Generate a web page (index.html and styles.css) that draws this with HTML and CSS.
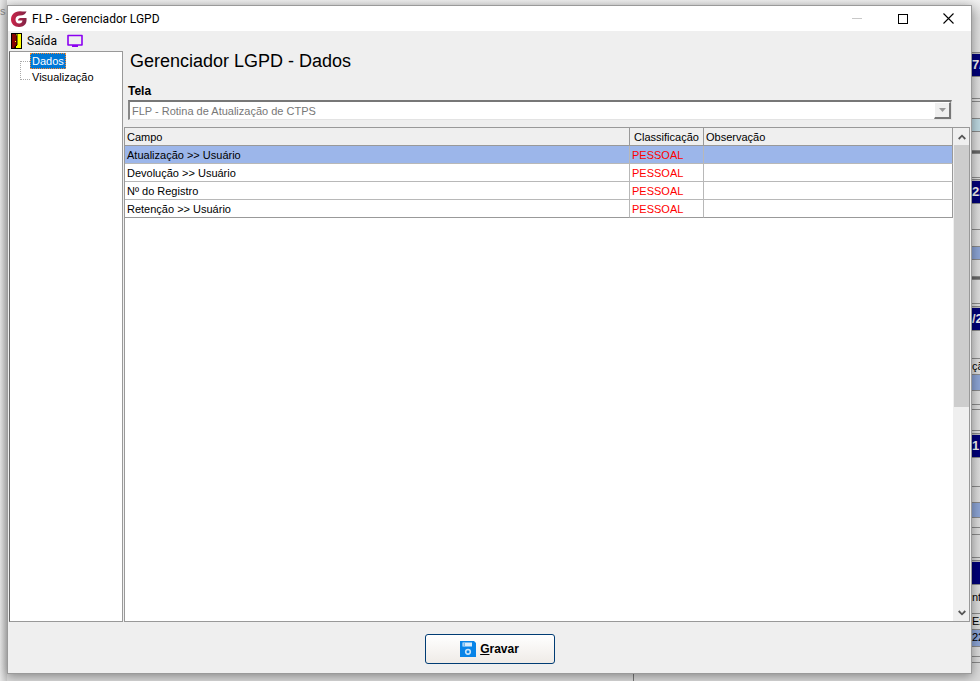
FILE: index.html
```html
<!DOCTYPE html>
<html lang="pt-BR">
<head>
<meta charset="utf-8">
<title>FLP - Gerenciador LGPD</title>
<link rel="stylesheet" href="styles.css">
</head>
<body>
<div class="backdrop" aria-hidden="true">
  <div class="backdrop-left">s</div>
  <div class="backdrop-main"><div class="backdrop-pane"></div></div>
  <div class="backdrop-right">
    <i class="gap tall"></i><b class="bar">7/</b>
    <i class="gap g22"></i><i class="gap g3"></i><i class="gap g17"></i><i class="sky"></i><i class="gap g19"></i><i class="dark"></i><i class="gap g24"></i><i class="gap g2"></i>
    <b class="bar">22</b>
    <i class="gap g26"></i><i class="gap g17"></i><i class="blue"></i><i class="gap g17"></i><i class="dark"></i><i class="gap g24"></i><i class="gap g3"></i>
    <b class="bar">/2</b>
    <i class="gap g28"></i><i class="cell">çã</i><i class="blue b16"></i><i class="gap g14"></i><i class="gap g5"></i><i class="gap g21"></i><i class="gap g3"></i>
    <b class="bar">1</b>
    <i class="gap g29"></i><i class="gap g16"></i><i class="blue b15"></i><i class="gap g10"></i><i class="gap g7"></i><i class="gap g23"></i><i class="gap g3"></i>
    <b class="bar"></b>
    <i class="cell c29">nto</i><i class="cell">Ex.</i><i class="blue b17">22</i><i class="gap g10"></i><i class="gap g6"></i>
  </div>
</div>
<main class="window">
  <header class="titlebar">
    <svg class="logo" viewBox="0 0 16 16"><defs><linearGradient id="lg" x1="0" y1="0" x2="1" y2="0"><stop offset="0" stop-color="#cc2449"/><stop offset="1" stop-color="#802446"/></linearGradient></defs><path fill="url(#lg)" d="M15.500.300C14 1 12 .3 9 .3 3 .3 0 4 0 8.500 0 13 3.500 16 8 16c3 0 5-1 6.500-3 1-1.500 1.200-4 1-6H9.500C8 7 7 8 7 9.500h4.500c-.2 2-1.500 3-3.300 3C6 12.500 4.500 11 4.500 8.500 4.500 6 6.500 4.500 9 4.500c3.500 0 5.500-1 6.500-4.200z"/></svg>
    <h1>FLP - Gerenciador LGPD</h1>
    <div class="caption-buttons">
      <button aria-label="Minimizar" disabled><svg viewBox="0 0 11 11"><path d="M1 5.500h10" stroke="#c8c8c8"/></svg></button>
      <button aria-label="Maximizar"><svg viewBox="0 0 11 11"><path d="M1 1h9v9H1z" fill="none" stroke="#000" shape-rendering="crispEdges"/></svg></button>
      <button aria-label="Fechar"><svg viewBox="0 0 11 11"><path d="M.5.5l10 10m0-10l-10 10" stroke="#000" stroke-width="1.100"/></svg></button>
    </div>
  </header>
  <nav class="toolbar">
    <button class="tool"><svg class="door" viewBox="0 0 11 16"><path d="M0 0h11v16H0z" fill="#000"/><path d="M5 1h5v14H5z" fill="#ff0"/><path d="M1 1h3l2 2v9l-2 1-1 2H1z" fill="#850000"/><path d="M6 1v11l-2 2" fill="none" stroke="#000"/><path d="M4 8h1v1H4z" fill="#ff0"/></svg>Saída</button>
    <button class="tool" aria-label="Monitor"><svg class="monitor" viewBox="0 0 16 14"><path d="M1 1.500h14v9.500H1z" fill="none" stroke="#8a00f0" stroke-width="1.600" stroke-linejoin="round"/><path d="M5 11h6v2H5z" fill="#8a00f0"/></svg></button>
  </nav>
  <div class="content">
    <aside class="tree">
      <ul>
        <li><a class="selected" href="#dados">Dados</a></li>
        <li><a href="#visualizacao">Visualização</a></li>
      </ul>
    </aside>
    <section class="page">
      <div class="form">
        <h2>Gerenciador LGPD - Dados</h2>
        <label for="tela">Tela</label>
        <div class="combo">
          <select id="tela" disabled><option>FLP - Rotina de Atualização de CTPS</option></select>
          <span class="drop"><svg viewBox="0 0 7 4"><path d="M0 0h7L3.500 4z" fill="#999"/></svg></span>
        </div>
      </div>
      <div class="grid-box">
        <div class="grid-area">
          <table>
            <colgroup><col><col class="col-class"><col class="col-obs"></colgroup>
            <thead><tr><th>Campo</th><th class="center">Classificação</th><th>Observação</th></tr></thead>
            <tbody>
              <tr class="current"><td>Atualização &gt;&gt; Usuário</td><td class="personal">PESSOAL</td><td></td></tr>
              <tr><td>Devolução &gt;&gt; Usuário</td><td class="personal">PESSOAL</td><td></td></tr>
              <tr><td>Nº do Registro</td><td class="personal">PESSOAL</td><td></td></tr>
              <tr><td>Retenção &gt;&gt; Usuário</td><td class="personal">PESSOAL</td><td></td></tr>
            </tbody>
          </table>
        </div>
        <div class="scrollbar">
          <button aria-label="Rolar para cima"><svg viewBox="0 0 8 6"><path d="M.7 5L4 1.700 7.300 5" fill="none" stroke="#555" stroke-width="1.800"/></svg></button>
          <div class="track"><div class="thumb"></div></div>
          <button aria-label="Rolar para baixo"><svg viewBox="0 0 8 6"><path d="M.7 1L4 4.300 7.300 1" fill="none" stroke="#555" stroke-width="1.800"/></svg></button>
        </div>
      </div>
    </section>
  </div>
  <footer class="actions">
    <button class="save"><svg viewBox="0 0 16 16"><path d="M0 0h14l2 2v14H0z" fill="#0884e8"/><path d="M2.500 1.500h9.500v4H2.500z" fill="#d8ecfc"/><path d="M3.500 2h1.500v3H3.500z" fill="#70b8f0"/><circle cx="8" cy="10.800" r="2.300" fill="none" stroke="#c8e4fa" stroke-width="1.600"/></svg><span><u>G</u>ravar</span></button>
  </footer>
</main>
</body>
</html>
```
FILE: styles.css
```css
* { box-sizing: border-box; }
html, body { height: 100%; }
body {
  margin: 0;
  padding: 5px 8px 7px 7px;
  background: #d9d9d9;
  color: #000;
  font: 11px/14px "Liberation Sans", Arial, sans-serif;
  overflow: hidden;
}
button { font: inherit; color: inherit; padding: 0; border: 0; background: none; display: flex; align-items: center; justify-content: center; }
svg { display: block; flex: none; }
h1, h2, ul { margin: 0; padding: 0; font-weight: normal; }

.backdrop { position: absolute; inset: 0; display: flex; overflow: hidden; background: linear-gradient(#f0f0f0, #dedede 18px, #d9d9d9); }
.backdrop-left { flex: none; width: 7px; padding-top: 4px; color: #888; background: linear-gradient(90deg, #e8e8e8, #cacaca); }
.backdrop-main { flex: 1; display: flex; align-items: flex-end; }
.backdrop-pane { width: 65%; height: 50%; border-right: 1px solid #777; }
.backdrop-right { flex: none; width: 8px; overflow: hidden; display: flex; flex-direction: column; }
.backdrop-right > * { flex: none; font-style: normal; white-space: nowrap; overflow: hidden; border-bottom: 1px solid #888; }
.bar { height: 24px; border-top: 1px solid #bbb; background: #000078; color: #eee; font-size: 13px; line-height: 22px; }
.cell { height: 16px; }
.c29 { height: 29px; line-height: 25px; }
.dark { height: 3px; background: #666; }
.sky { height: 13px; background: #bcd6df; }
.blue { height: 13px; background: #8ba3d3; }
.b15 { height: 15px; }
.b16 { height: 16px; }
.b17 { height: 17px; }
.tall { height: 53px; }
.g2 { height: 2px; } .g3 { height: 3px; } .g5 { height: 5px; } .g6 { height: 6px; } .g7 { height: 7px; }
.g10 { height: 10px; } .g14 { height: 14px; } .g16 { height: 16px; } .g17 { height: 17px; } .g19 { height: 19px; }
.g21 { height: 21px; } .g22 { height: 22px; } .g23 { height: 23px; } .g24 { height: 24px; } .g26 { height: 26px; } .g28 { height: 28px; } .g29 { height: 29px; }

.window {
  position: relative;
  height: 100%;
  display: flex;
  flex-direction: column;
  border: 1px solid #9a9a9a;
  background: #efefef;
  box-shadow: 0 2px 10px rgba(0, 0, 0, .4);
}
.titlebar { flex: none; height: 25px; display: flex; align-items: center; gap: 5px; padding-left: 3px; background: #fff; }
.logo { width: 16px; height: 16px; }
.titlebar h1 { flex: 1; font: 12px/16px Roboto, "Noto Sans", sans-serif; }
.caption-buttons { display: flex; }
.caption-buttons button { width: 46px; height: 24px; }
.caption-buttons svg { width: 11px; height: 11px; }

.toolbar { flex: none; height: 20px; display: flex; align-items: center; gap: 10px; padding-left: 3px; }
.tool { gap: 5px; font: 12px/16px Roboto, "Noto Sans", sans-serif; }
.door { width: 11px; height: 16px; }
.monitor { width: 16px; height: 14px; }

.content { flex: 1; min-height: 0; display: flex; gap: 1px; padding: 0 1px; }
.tree { flex: none; width: 114px; background: #fff; border: 1px solid #999; border-left-color: #666; }
.tree ul { list-style: none; margin-left: 10px; padding: 1px 0 0 10px; position: relative; }
.tree ul::before { content: ""; position: absolute; left: 0; top: 9px; width: 9px; height: 17px; border: 1px dotted #aaa; border-right: 0; }
.tree li { height: 16px; }
.tree a { display: inline-block; height: 16px; padding: 0 1px; line-height: 14px; border: 1px solid transparent; color: #000; text-decoration: none; }
.tree .selected { background: #0078d7; border: 1px dotted #ff8728; color: #fff; }

.page { flex: 1; min-width: 0; display: flex; flex-direction: column; }
.form { flex: none; height: 76px; padding: 0 18px 0 4px; display: flex; flex-direction: column; align-items: stretch; }
.form h2 { padding-left: 2px; font-size: 18px; line-height: 20px; }
.form label { margin: 13px 0 2px; font-size: 12px; line-height: 14px; font-weight: bold; }
.combo { display: flex; height: 20px; background: #fff; border: 1px solid #e3e3e3; border-top: 2px solid #777; border-left: 2px solid #888; }
.combo select { flex: 1; min-width: 0; appearance: none; border: 0; padding: 1px 2px 0; background: #fff; color: #777; opacity: 1; font: inherit; line-height: 16px; }
.drop { width: 17px; background: #efefef; border: 1px solid #fff; border-right: 2px solid #777; border-bottom: 2px solid #777; display: flex; align-items: center; justify-content: center; }
.drop svg { width: 7px; height: 4px; }

.grid-box { flex: 1; min-height: 0; display: flex; background: #fff; border: 1px solid #999; }
.grid-area { flex: 1; min-width: 0; }
table { width: 100%; table-layout: fixed; border-collapse: separate; border-spacing: 0; }
.col-class { width: 74px; }
.col-obs { width: 249px; }
th, td { height: 18px; padding: 1px 2px 0; border-right: 1px solid #b8b8b8; border-bottom: 1px solid #b8b8b8; line-height: 16px; text-align: left; font-weight: normal; white-space: nowrap; }
th { background: #efefef; border-color: #999; }
th:last-child, td:last-child { border-right-color: #999; }
tbody tr:last-child td { border-bottom-color: #999; }
.center { text-align: center; }
.current { background: #9cb6ea; }
.personal { color: #f00; }
.scrollbar { flex: none; width: 16px; padding-left: 1px; display: flex; flex-direction: column; background: #efefef; }
.scrollbar button { width: 15px; height: 17px; }
.scrollbar svg { width: 8px; height: 6px; }
.track { flex: 1; }
.thumb { height: 57%; background: #cdcdcd; }

.actions { flex: none; height: 51px; display: flex; align-items: center; justify-content: center; padding-top: 2px; }
.save { width: 130px; height: 30px; gap: 4px; border: 1px solid #003c74; border-radius: 3px; background: linear-gradient(#fff, #efebe7); font-size: 12px; font-weight: bold; }
.save svg { width: 16px; height: 16px; }
```
